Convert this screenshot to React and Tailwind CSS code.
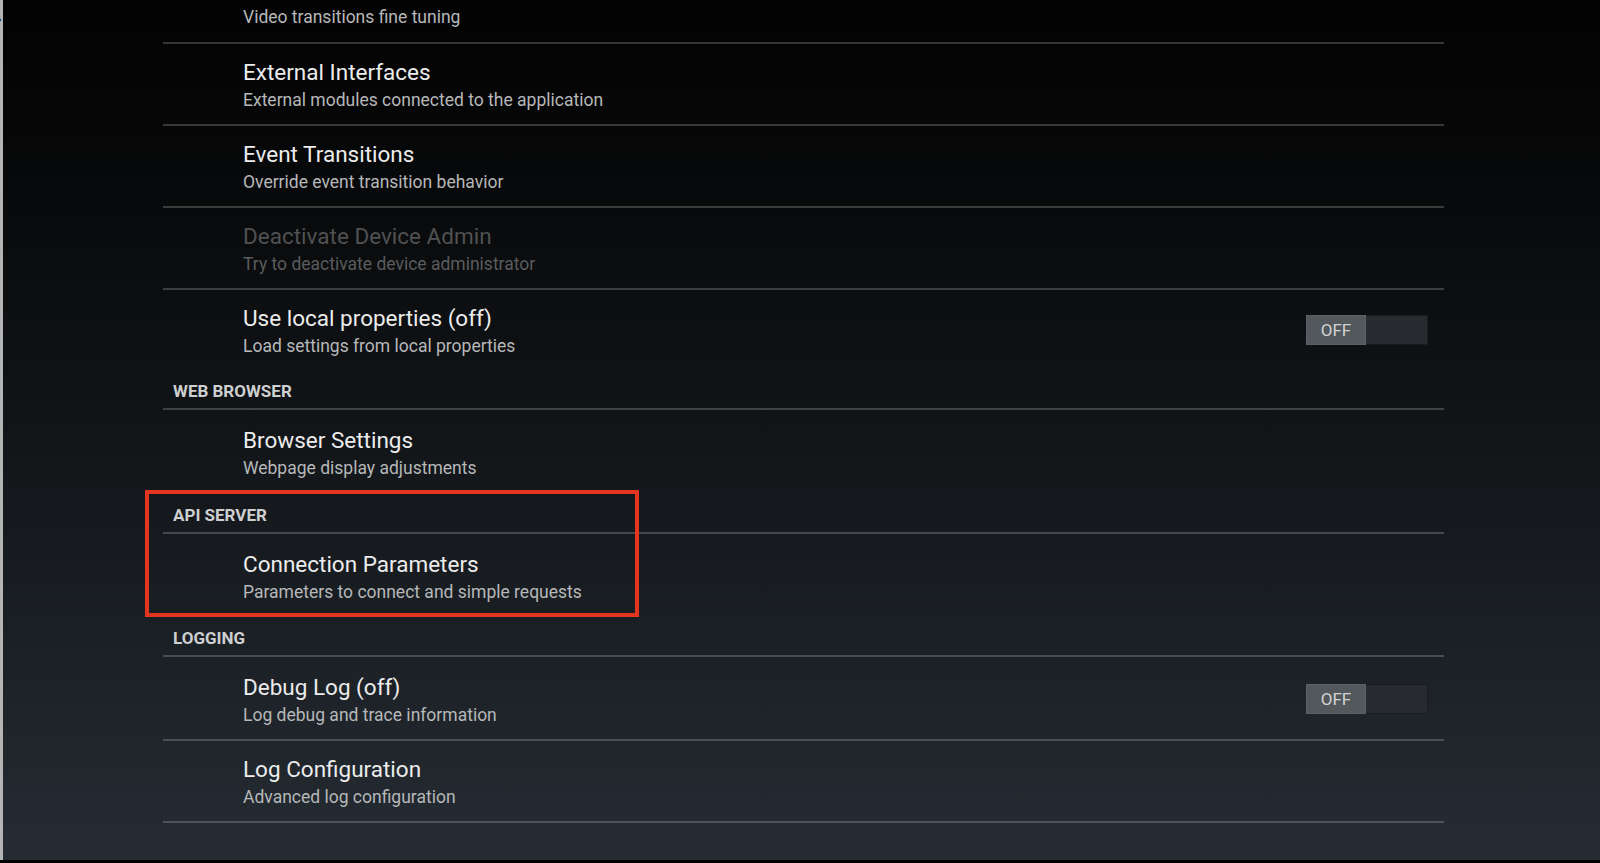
import React from "react";

const Divider = () => <div className="h-[2px] bg-white/20" />;

function Toggle() {
  return (
    <div className="mb-[4px] flex h-[30px] w-[122px] bg-[#272b2f] shadow-[inset_0_0_0_1px_rgba(0,0,0,0.35)]">
      <div className="flex h-full w-[60px] items-center justify-center bg-[#53585c] text-[17px] leading-none text-[#d2d2d2] shadow-[inset_0_0_0_1px_rgba(255,255,255,0.06)]">
        OFF
      </div>
    </div>
  );
}

function Row({ title, subtitle, disabled, toggle, pt = "pt-[14px]", pb = "pb-[10px]" }) {
  return (
    <div className={`flex items-center pl-[80px] pr-[16px] ${pt} ${pb}`}>
      <div className="flex flex-1 flex-col">
        <div
          className={`text-[22.5px] leading-[28px] ${disabled ? "text-[#4f5152]" : "text-[#ececec]"}`}
        >
          {title}
        </div>
        <div
          className={`text-[17.5px] leading-[28px] ${disabled ? "text-[#5a5c5e]" : "text-[#b6b8b9]"}`}
        >
          {subtitle}
        </div>
      </div>
      {toggle && <Toggle />}
    </div>
  );
}

function Header({ children }) {
  return (
    <div className="flex h-[38px] items-end pl-[10px] pb-[7px]">
      <span className="text-[17px] font-bold leading-[20px] text-[#cdcfd0]">{children}</span>
    </div>
  );
}

export default function App() {
  return (
    <div
      className="relative flex h-[863px] w-[1600px] overflow-hidden bg-black"
      style={{ fontFamily: "Roboto, 'Noto Sans', sans-serif" }}
    >
      <div className="relative h-[860px] w-[3px] shrink-0 overflow-hidden bg-[#b4b4b4]">
        <span className="absolute left-[-8px] top-[6px] text-[14px] text-black">A</span>
        <span className="absolute left-[-5px] top-[50px] text-[14px] text-black">t</span>
      </div>
      <div className="flex h-[860px] flex-1 flex-col bg-gradient-to-b from-[#030303] to-[#252c33] pl-[160px] pr-[156px]">
        <div className="pl-[80px] pt-[4px] pb-[12px] text-[17.5px] leading-[26px] text-[#b6b8b9]">
          Video transitions fine tuning
        </div>
        <Divider />
        <Row title="External Interfaces" subtitle="External modules connected to the application" />
        <Divider />
        <Row title="Event Transitions" subtitle="Override event transition behavior" />
        <Divider />
        <Row title="Deactivate Device Admin" subtitle="Try to deactivate device administrator" disabled />
        <Divider />
        <Row title="Use local properties (off)" subtitle="Load settings from local properties" toggle />
        <Header>WEB BROWSER</Header>
        <Divider />
        <Row title="Browser Settings" subtitle="Webpage display adjustments" pt="pt-[16px]" pb="pb-[12px]" />
        <Header>API SERVER</Header>
        <Divider />
        <Row
          title="Connection Parameters"
          subtitle="Parameters to connect and simple requests"
          pt="pt-[16px]"
          pb="pb-[11px]"
        />
        <Header>LOGGING</Header>
        <Divider />
        <Row title="Debug Log (off)" subtitle="Log debug and trace information" toggle pt="pt-[16px]" pb="pb-[10px]" />
        <Divider />
        <Row title="Log Configuration" subtitle="Advanced log configuration" />
        <Divider />
      </div>
      <div className="pointer-events-none absolute left-[145px] top-[490px] h-[127px] w-[494px] border-[4px] border-[#e5341f]" />
    </div>
  );
}
